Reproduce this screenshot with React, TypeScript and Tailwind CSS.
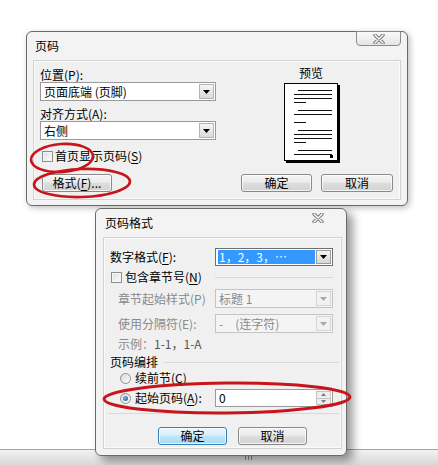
import type { ReactNode } from "react";

function CloseX() {
	return (
		<svg width="12" height="10" viewBox="0 0 12 10">
			<path d="M2 1 L10 9 M10 1 L2 9" stroke="#7a7a7a" strokeWidth="3.4" strokeLinecap="round" />
			<path d="M2 1 L10 9 M10 1 L2 9" stroke="#ffffff" strokeWidth="1.4" strokeLinecap="round" />
		</svg>
	);
}

function Arrow({ gray }: { gray?: boolean }) {
	return (
		<svg width="7" height="4" viewBox="0 0 7 4">
			<path d="M0 0 H7 L3.5 4 Z" fill={gray ? "#a8a8a8" : "#000000"} />
		</svg>
	);
}

function U({ children }: { children: ReactNode }) {
	return <span className="underline underline-offset-2">{children}</span>;
}

function WinButton({ children, focus, w }: { children: ReactNode; focus?: boolean; w: string }) {
	return (
		<div
			className={
				(focus
					? "border-[#3c7fb1] bg-[linear-gradient(#eaf6fd,#d9f0fc_45%,#bee6fd_50%,#a7d9f5)] "
					: "border-[#8a8a8a] bg-[linear-gradient(#f4f4f4,#ececec_45%,#dedede_50%,#d2d2d2)] ") +
				w +
				" flex h-[18px] items-center justify-center rounded-[3px] border shadow-[inset_0_0_0_1px_rgba(255,255,255,0.7)]"
			}
		>
			{children}
		</div>
	);
}

function Checkbox() {
	return (
		<div className="h-[11px] w-[11px] shrink-0 border border-[#8f8f8f] bg-[linear-gradient(135deg,#dcdcdc,#ffffff)] shadow-[inset_0_0_0_1px_#f4f4f4]" />
	);
}

function Radio({ checked }: { checked?: boolean }) {
	return (
		<div className="flex h-[11px] w-[11px] shrink-0 items-center justify-center rounded-full border border-[#8f8f8f] bg-[linear-gradient(135deg,#d8d8d8,#ffffff)]">
			{checked && (
				<div className="h-[5px] w-[5px] rounded-full bg-[radial-gradient(circle_at_35%_35%,#7fb4e0,#1c4f7f)]" />
			)}
		</div>
	);
}

function Select({ text, w }: { text: string; w: string }) {
	return (
		<div className={w + " flex h-[19px] items-center border border-[#9a9a9a] bg-white"}>
			<div className="flex-1 whitespace-nowrap pl-[3px]">{text}</div>
			<div className="m-px flex h-[15px] w-[15px] items-center justify-center border border-[#b5b5b5] bg-[linear-gradient(#f6f6f6,#dadada)]">
				<Arrow />
			</div>
		</div>
	);
}

function DisabledSelect({ text }: { text: string }) {
	return (
		<div className="flex h-[19px] w-[118px] items-center border border-[#c4c4c4] bg-[#f4f4f4] text-[#8a8a8a]">
			<div className="flex-1 whitespace-nowrap pl-[3px]">{text}</div>
			<div className="m-px flex h-[15px] w-[15px] items-center justify-center border border-[#d6d6d6] bg-[#f2f2f2]">
				<Arrow gray />
			</div>
		</div>
	);
}

function PagePreview() {
	const groups = [7, 27, 47, 67];
	return (
		<div className="h-[78px] w-[54px] border border-black bg-white shadow-[2px_2px_0_#000]">
			<svg width="52" height="76" viewBox="0 0 52 76">
				{groups.map((g, i) => (
					<g key={g} stroke="#111" strokeWidth="1">
						<line x1="13" y1={g - 0.5} x2="47" y2={g - 0.5} />
						<line x1="9" y1={g + 3.5} x2="47" y2={g + 3.5} />
						{i !== 1 && i !== 3 && <line x1="9" y1={g + 7.5} x2="47" y2={g + 7.5} />}
						{i !== 3 && <line x1="9" y1={g + 11.5} x2="21" y2={g + 11.5} />}
					</g>
				))}
				<rect x="45" y="71" width="3" height="3" fill="#000" />
			</svg>
		</div>
	);
}

function PageNumberDialog() {
	return (
		<div className="flex h-[175px] w-[382px] flex-col rounded-[6px] border border-[#6a6a6a] bg-[#f3f3f3] shadow-[2px_2px_6px_rgba(0,0,0,0.25)]">
			<div className="flex h-[28px] items-start justify-between">
				<div className="pl-[8px] pt-[7px]">页码</div>
				<div className="mr-[6px] mt-[-1px] flex h-[15px] w-[45px] items-center justify-center rounded-b-[4px] border border-[#8b8b8b] bg-[linear-gradient(#fafafa,#e4e4e4)]">
					<CloseX />
				</div>
			</div>
			<div className="mx-[6px] flex h-[140px] border border-[#d2d2d2] bg-[#f0f0f0] pl-[6px] shadow-[inset_0_0_0_1px_#fbfbfb]">
				<div className="flex w-[176px] flex-col">
					<div className="mt-[7px] h-[14px]">
						位置(<U>P</U>):
					</div>
					<Select text="页面底端 (页脚)" w="w-[176px]" />
					<div className="mt-[6px] h-[14px]">
						对齐方式(<U>A</U>):
					</div>
					<Select text="右侧" w="w-[176px]" />
					<div className="mt-[9px] flex h-[14px] items-center gap-[2px] pl-[2px]">
						<Checkbox />
						<span>
							首页显示页码(<U>S</U>)
						</span>
					</div>
					<div className="ml-[2px] mt-[11px]">
						<WinButton w="w-[70px]">
							格式(<U>F</U>)...
						</WinButton>
					</div>
				</div>
				<div className="flex flex-1 flex-col">
					<div className="ml-[67px] flex w-[56px] flex-col items-center">
						<div className="mt-[5px] h-[14px]">预览</div>
						<div className="mt-[3px] h-[80px]">
							<PagePreview />
						</div>
					</div>
					<div className="ml-[25px] mt-[11px] flex gap-[9px]">
						<WinButton w="w-[71px]">确定</WinButton>
						<WinButton w="w-[72px]">取消</WinButton>
					</div>
				</div>
			</div>
		</div>
	);
}

function FormatDialog() {
	return (
		<div className="flex h-[248px] w-[252px] flex-col rounded-[6px] border border-[#6a6a6a] bg-[#f3f3f3] shadow-[6px_5px_10px_rgba(0,0,0,0.4)]">
			<div className="flex h-[28px] items-start justify-between">
				<div className="pl-[9px] pt-[7px]">页码格式</div>
				<div className="mr-[22px] mt-[4px]">
					<CloseX />
				</div>
			</div>
			<div className="ml-[7px] mr-[4px] flex h-[212px] flex-col border border-[#d2d2d2] bg-[#f0f0f0] shadow-[inset_0_0_0_1px_#fbfbfb]">
				<div className="mt-[10px] flex h-[18px] items-center">
					<div className="w-[111px] pl-[6px]">
						数字格式(<U>F</U>):
					</div>
					<div className="flex h-[18px] w-[118px] items-center border border-[#6f6f6f] bg-white">
						<div className="ml-[2px] flex h-[14px] flex-1 items-center whitespace-nowrap bg-[#3399ff] pl-[1px] text-white">
							1，2，3，…
						</div>
						<div className="m-px flex h-[14px] w-[15px] items-center justify-center border border-[#9a9a9a] bg-[linear-gradient(#f4f4f4,#d6d6d6)]">
							<Arrow />
						</div>
					</div>
				</div>
				<div className="mt-[4px] flex h-[14px] items-center">
					<div className="flex w-[111px] items-center gap-[3px] pl-[7px]">
						<Checkbox />
						<span>
							包含章节号(<U>N</U>)
						</span>
					</div>
					<div className="h-px w-[118px] bg-[#d9d9d9]" />
				</div>
				<div className="mt-[5px] flex h-[19px] items-center">
					<div className="w-[111px] pl-[14px] text-[#8a8a8a]">章节起始样式(P)</div>
					<DisabledSelect text="标题 1" />
				</div>
				<div className="mt-[6px] flex h-[19px] items-center">
					<div className="w-[111px] pl-[14px] text-[#8a8a8a]">使用分隔符(E):</div>
					<DisabledSelect text="-　(连字符)" />
				</div>
				<div className="mt-[4px] h-[14px] pl-[14px] text-[#8a8a8a]">
					示例：<span className="text-[#555]">1-1，1-A</span>
				</div>
				<div className="mt-[4px] flex h-[14px] items-center pr-[2px]">
					<div className="pl-[6px]">页码编排</div>
					<div className="ml-[6px] h-px flex-1 bg-[#d9d9d9]" />
				</div>
				<div className="mt-[2px] flex h-[14px] items-center gap-[4px] pl-[16px]">
					<Radio />
					<span>
						续前节(<U>C</U>)
					</span>
				</div>
				<div className="mt-[4px] flex h-[18px] items-center">
					<div className="flex w-[111px] items-center gap-[4px] pl-[16px]">
						<Radio checked />
						<span>
							起始页码(<U>A</U>):
						</span>
					</div>
					<div className="flex h-[18px] w-[118px] items-center border border-[#9a9a9a] bg-white">
						<div className="flex-1 pl-[3px]">0</div>
						<div className="m-px flex h-[14px] w-[15px] flex-col border border-[#c4c4c4] bg-[#eeeeee]">
							<div className="flex flex-1 items-center justify-center border-b border-[#c4c4c4]">
								<svg width="5" height="3" viewBox="0 0 5 3">
									<path d="M0 3 H5 L2.5 0 Z" fill="#7a7a7a" />
								</svg>
							</div>
							<div className="flex flex-1 items-center justify-center">
								<svg width="5" height="3" viewBox="0 0 5 3">
									<path d="M0 0 H5 L2.5 3 Z" fill="#7a7a7a" />
								</svg>
							</div>
						</div>
					</div>
				</div>
				<div className="ml-[4px] mr-[2px] mt-[6px] h-px bg-[#d9d9d9]" />
				<div className="mt-[13px] flex gap-[11px] pl-[54px]">
					<WinButton w="w-[69px]" focus>
						确定
					</WinButton>
					<WinButton w="w-[69px]">取消</WinButton>
				</div>
			</div>
		</div>
	);
}

export default function App() {
	return (
		<div className="relative h-[465px] w-[438px] overflow-hidden bg-white font-['Noto_Sans_CJK_SC',sans-serif] text-[12px] leading-[14px] text-black">
			<div className="pl-[26px] pt-[31px]">
				<PageNumberDialog />
			</div>
			<div className="relative z-10 pl-[95px] pt-[2px]">
				<FormatDialog />
			</div>
			<div className="absolute bottom-0 left-0 flex h-[16px] w-full justify-center border-t border-[#a5a5a5] bg-[linear-gradient(#f2f2f2,#d8d8d8)] pt-[4px]">
				<div className="ml-[58px] flex gap-[2px]">
					<div className="h-[6px] w-px bg-[#8a8a8a]" />
					<div className="h-[6px] w-px bg-[#8a8a8a]" />
					<div className="h-[6px] w-px bg-[#8a8a8a]" />
				</div>
			</div>
			<svg className="pointer-events-none absolute inset-0 z-20" width="438" height="465" viewBox="0 0 438 465">
				<g fill="none" stroke="#c8151b" strokeWidth="2.6">
					<ellipse cx="62" cy="158" rx="31" ry="14" transform="rotate(-4 62 158)" />
					<ellipse cx="82" cy="183" rx="48" ry="14" transform="rotate(-2 82 183)" />
					<ellipse cx="227" cy="398" rx="123" ry="15" strokeWidth="3" transform="rotate(-0.5 227 398)" />
				</g>
			</svg>
		</div>
	);
}
